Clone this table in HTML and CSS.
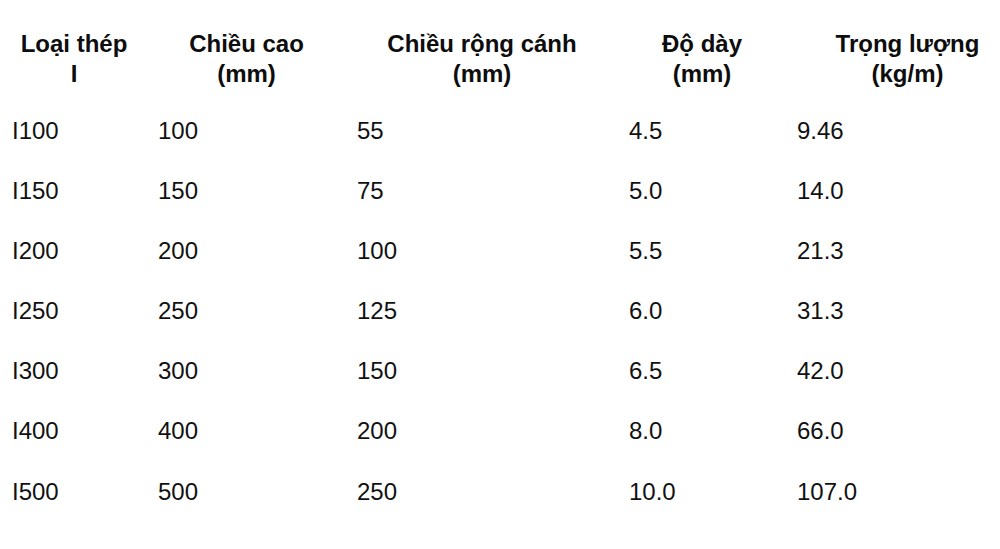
FILE: index.html
```html
<!DOCTYPE html>
<html lang="vi">
<head>
<meta charset="utf-8">
<title>Bảng thép I</title>
<link rel="stylesheet" href="styles.css">
</head>
<body>
<div class="wrap">
<table class="spec">
  <colgroup>
    <col class="c1"><col class="c2"><col class="c3"><col class="c4"><col class="c5">
  </colgroup>
  <thead>
    <tr>
      <th>Loại thép<br>I</th>
      <th>Chiều cao<br>(mm)</th>
      <th>Chiều rộng cánh<br>(mm)</th>
      <th>Độ dày<br>(mm)</th>
      <th>Trọng lượng<br>(kg/m)</th>
    </tr>
  </thead>
  <tbody>
    <tr><td>I100</td><td>100</td><td>55</td><td>4.5</td><td>9.46</td></tr>
    <tr><td>I150</td><td>150</td><td>75</td><td>5.0</td><td>14.0</td></tr>
    <tr><td>I200</td><td>200</td><td>100</td><td>5.5</td><td>21.3</td></tr>
    <tr><td>I250</td><td>250</td><td>125</td><td>6.0</td><td>31.3</td></tr>
    <tr><td>I300</td><td>300</td><td>150</td><td>6.5</td><td>42.0</td></tr>
    <tr><td>I400</td><td>400</td><td>200</td><td>8.0</td><td>66.0</td></tr>
    <tr><td>I500</td><td>500</td><td>250</td><td>10.0</td><td>107.0</td></tr>
  </tbody>
</table>
</div>
</body>
</html>
```
FILE: styles.css
```css
html, body {
  margin: 0;
  padding: 0;
  background: #ffffff;
}
body {
  font-family: "Liberation Sans", Arial, sans-serif;
  color: #111111;
  overflow: hidden;
}
.wrap {
  width: 1000px;
  overflow: hidden;
}
.spec {
  border-collapse: collapse;
  table-layout: fixed;
  width: 1028px;
  margin: 18px 0 0 1px;
}
.c1 { width: 146px; }
.c2 { width: 199px; }
.c3 { width: 272px; }
.c4 { width: 168px; }
.c5 { width: 243px; }
.spec th {
  font-weight: bold;
  font-size: 24px;
  line-height: 30px;
  text-align: center;
  padding: 11px 11px 12px 11px;
  color: #0d0d0d;
}
.spec td {
  font-size: 24px;
  line-height: 28px;
  text-align: left;
  padding: 16px 11px 16px 11px;
  white-space: nowrap;
}
.spec tbody tr:last-child td {
  padding-top: 17px;
}
```
